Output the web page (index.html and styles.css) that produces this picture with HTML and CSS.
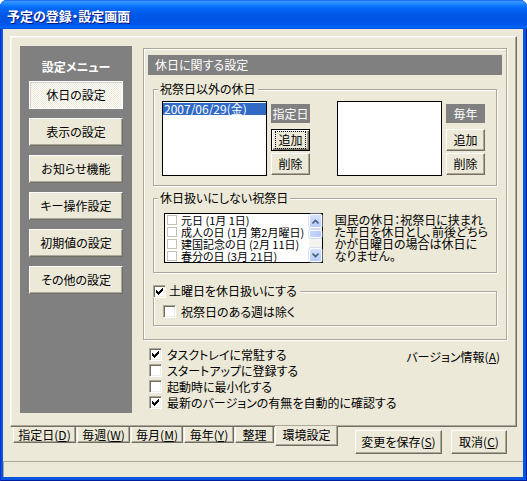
FILE: index.html
```html
<!DOCTYPE html>
<html lang="ja">
<head>
<meta charset="utf-8">
<title>予定の登録・設定画面</title>
<link rel="stylesheet" href="styles.css">
</head>
<body>
<div class="window">
  <div class="titlebar"><span class="title">予定の登録・設定画面</span></div>
  <div class="client">
    <div class="tabpanel">
      <div class="sidebar">
        <div class="menu-title">設定メニュー</div>
        <div class="btn menu-btn active">休日の設定</div>
        <div class="btn menu-btn">表示の設定</div>
        <div class="btn menu-btn">お知らせ機能</div>
        <div class="btn menu-btn">キー操作設定</div>
        <div class="btn menu-btn">初期値の設定</div>
        <div class="btn menu-btn">その他の設定</div>
      </div>
      <div class="main">
        <div class="content">
          <div class="header">休日に関する設定</div>
          <fieldset class="group g1">
            <legend>祝祭日以外の休日</legend>
            <div class="list-row">
              <div class="listbox"><div class="item selected">2007/06/29(金)</div></div>
              <div class="btn-col">
                <div class="tag">指定日</div>
                <div class="btn small default"><span class="focus">追加</span></div>
                <div class="btn small">削除</div>
              </div>
              <div class="listbox second"></div>
              <div class="btn-col">
                <div class="tag">毎年</div>
                <div class="btn small">追加</div>
                <div class="btn small">削除</div>
              </div>
            </div>
          </fieldset>
          <fieldset class="group g2">
            <legend>休日扱いにしない祝祭日</legend>
            <div class="holiday-row">
              <div class="checklist">
                <div class="cl-items">
                  <div class="cl-row"><span class="cb-small"></span>元日 (1月 1日)</div>
                  <div class="cl-row"><span class="cb-small"></span>成人の日 (1月 第2月曜日)</div>
                  <div class="cl-row"><span class="cb-small"></span>建国記念の日 (2月 11日)</div>
                  <div class="cl-row"><span class="cb-small"></span>春分の日 (3月 21日)</div>
                </div>
                <div class="vscroll">
                  <div class="sb-btn"><svg width="7" height="5" viewBox="0 0 7 5"><path d="M0.5 4.5 L3.5 1.5 L6.5 4.5" fill="none" stroke="#4D6185" stroke-width="1.6"/></svg></div>
                  <div class="sb-track"><div class="sb-thumb"></div></div>
                  <div class="sb-btn"><svg width="7" height="5" viewBox="0 0 7 5"><path d="M0.5 0.5 L3.5 3.5 L6.5 0.5" fill="none" stroke="#4D6185" stroke-width="1.6"/></svg></div>
                </div>
              </div>
              <div class="note">国民の休日：祝祭日に挟まれ<br>た平日を休日とし、前後どちら<br>かが日曜日の場合は休日に<br>なりません。</div>
            </div>
          </fieldset>
          <fieldset class="group g3">
            <legend><span class="cb"><svg width="7" height="7" viewBox="0 0 7 7"><path d="M0 2h1v1h1v1h1v-1h1v-1h1v-1h1v-1h1v3h-1v1h-1v1h-1v1h-1v1h-1v-1h-1v-1h-1z"/></svg></span><span class="legend-text">土曜日を休日扱いにする</span></legend>
            <div class="check-row inner"><span class="cb"></span>祝祭日のある週は除く</div>
          </fieldset>
        </div>
        <div class="options">
          <div class="checks">
            <div class="check-row"><span class="cb"><svg width="7" height="7" viewBox="0 0 7 7"><path d="M0 2h1v1h1v1h1v-1h1v-1h1v-1h1v-1h1v3h-1v1h-1v1h-1v1h-1v1h-1v-1h-1v-1h-1z"/></svg></span>タスクトレイに常駐する</div>
            <div class="check-row"><span class="cb"></span>スタートアップに登録する</div>
            <div class="check-row"><span class="cb"></span>起動時に最小化する</div>
            <div class="check-row"><span class="cb"><svg width="7" height="7" viewBox="0 0 7 7"><path d="M0 2h1v1h1v1h1v-1h1v-1h1v-1h1v-1h1v3h-1v1h-1v1h-1v1h-1v1h-1v-1h-1v-1h-1z"/></svg></span>最新のバージョンの有無を自動的に確認する</div>
          </div>
          <div class="version">バージョン情報(<u>A</u>)</div>
        </div>
      </div>
    </div>
    <div class="bottom">
      <div class="tabs">
        <div class="tab t1">指定日(<u>D</u>)</div>
        <div class="tab t2">毎週(<u>W</u>)</div>
        <div class="tab t3">毎月(<u>M</u>)</div>
        <div class="tab t4">毎年(<u>Y</u>)</div>
        <div class="tab t5">整理</div>
        <div class="tab t6 selected">環境設定</div>
      </div>
      <div class="buttons">
        <div class="btn wide">変更を保存(<u>S</u>)</div>
        <div class="btn cancel">取消(<u>C</u>)</div>
      </div>
    </div>
    <div class="statusbar"></div>
  </div>
</div>
</body>
</html>
```
FILE: styles.css
```css
html, body {
  margin: 0;
  padding: 0;
}
body {
  background: #ffffff;
  font-family: "Noto Sans CJK JP", "Noto Sans", sans-serif;
  font-size: 12px;
  font-feature-settings: "palt";
  color: #000;
}
u { text-decoration: underline; text-underline-offset: 1px; }

.window {
  width: 527px;
  height: 481px;
  box-sizing: border-box;
  display: flex;
  flex-direction: column;
  background: #0A55E0;
  border-radius: 7px 7px 0 0;
  overflow: hidden;
  box-shadow: inset 1px 0 0 #0831D9, inset -1px 0 0 #001EA0, inset 0 -1px 0 #001EA0;
}
.titlebar {
  height: 29px;
  flex: none;
  display: flex;
  align-items: center;
  padding-left: 7px;
  background: linear-gradient(180deg, #0058EE 0px, #3A93FF 1px, #288EFF 3px, #127DFF 5px, #0369FC 8px, #0262EE 11px, #0057E5 15px, #0054E3 20px, #0055EB 24px, #005BF5 26px, #026AFE 27px, #0062EF 28px, #0043CF 29px);
}
.title {
  color: #fff;
  font-weight: bold;
  font-size: 13px;
  line-height: 16px;
  text-shadow: 1px 1px 0 #0A1883;
  margin-top: 2px;
}
.client {
  flex: 1;
  margin: 0 4px 4px 3px;
  background: #ECE9D8;
  display: flex;
  flex-direction: column;
  padding: 7px 6px 0 7px;
  min-height: 0;
}

/* tab panel */
.tabpanel {
  height: 391px;
  flex: none;
  box-sizing: border-box;
  border: 1px solid;
  border-color: #fff #716F64 #716F64 #fff;
  box-shadow: inset -1px -1px 0 #ACA899, inset 1px 1px 0 #F5F4EA;
  display: grid;
  grid-template-columns: 112px 364px;
  column-gap: 11px;
  padding: 9px 9px 13px 9px;
}

/* generic button */
.btn {
  box-sizing: border-box;
  background: #ECE9D8;
  border: 1px solid;
  border-color: #fff #716F64 #716F64 #fff;
  box-shadow: inset -1px -1px 0 #ACA899;
  display: flex;
  align-items: center;
  justify-content: center;
  white-space: nowrap;
  line-height: 14px;
}

/* sidebar */
.sidebar {
  background: #808080;
  display: flex;
  flex-direction: column;
  align-items: center;
  padding-top: 14px;
  gap: 9px;
}
.menu-title {
  color: #fff;
  font-weight: bold;
  line-height: 14px;
  margin-bottom: -2px;
}
.menu-btn {
  width: 94px;
  height: 28px;
  font-size: 12px;
}
.menu-btn.active {
  background: repeating-conic-gradient(#ffffff 0 25%, #ECE9D8 0 50%) 0 0 / 2px 2px;
  border-color: #fff;
  box-shadow: inset 1px 1px 0 #D4D0C8;
}

/* main column */
.main {
  display: flex;
  flex-direction: column;
  padding-top: 2px;
  min-width: 0;
}
.content {
  height: 292px;
  box-sizing: border-box;
  border: 1px solid #ACA899;
  box-shadow: inset 1px 1px 0 #fff, 1px 1px 0 #fff;
  padding: 6px 4px 0 4px;
  display: flex;
  flex-direction: column;
  flex: none;
}
.header {
  height: 20px;
  background: #808080;
  color: #fff;
  line-height: 20px;
  padding-left: 7px;
}

/* group boxes */
.group {
  border: 1px solid #ACA899;
  box-shadow: inset 1px 1px 0 #fff, 1px 1px 0 #fff;
  margin: 0 5px;
  padding: 0 8px 8px 8px;
  min-inline-size: 0;
}
.group legend {
  padding: 0 2px;
  margin-left: -4px;
  line-height: 14px;
  background: #ECE9D8;
}
.g1 { margin-top: 7px; }
.g2 { margin-top: 5px; padding-bottom: 9px; }
.g3 { margin-top: 11px; padding-bottom: 7px; }
.g3 legend {
  margin-left: -9px;
  padding: 0 3px 0 0;
  display: flex;
  align-items: center;
}
.legend-text { margin-left: 3px; }

.list-row {
  display: flex;
  margin-top: 5px;
}
.listbox {
  width: 105px;
  height: 75px;
  box-sizing: border-box;
  border: 1px solid #000;
  background: #fff;
  padding-top: 1px;
}
.listbox.second { margin-left: 27px; }
.item {
  height: 12px;
  line-height: 12px;
  padding-left: 1px;
  white-space: nowrap;
}
.item.selected {
  background: #316AC5;
  color: #fff;
}
.btn-col {
  width: 39px;
  margin-left: 4px;
  padding-top: 3px;
  display: flex;
  flex-direction: column;
}
.tag {
  height: 19px;
  background: #808080;
  color: #fff;
  line-height: 19px;
  text-align: center;
  margin-bottom: 6px;
}
.btn.small {
  height: 22px;
  margin-bottom: 2px;
}
.btn.default {
  border: 1px solid #000;
  box-shadow: inset 1px 1px 0 #fff, inset -1px -1px 0 #716F64, inset -2px -2px 0 #ACA899;
}
.focus {
  outline: 1px dotted #000;
  outline-offset: 1px;
  padding: 0 1px;
}

/* holidays checklist */
.holiday-row {
  display: flex;
  margin-top: 8px;
  margin-left: 2px;
}
.checklist {
  width: 173px;
  height: 50px;
  box-sizing: border-box;
  border: 1px solid #000;
  background: #fff;
  display: flex;
}
.cl-items {
  flex: 1;
  overflow-x: clip;
  min-width: 0;
}
.cl-row {
  height: 12px;
  line-height: 12px;
  font-size: 11px;
  display: flex;
  align-items: center;
  white-space: nowrap;
}
.cb-small {
  width: 10px;
  height: 10px;
  box-sizing: border-box;
  border: 1px solid #C5C2B2;
  background: #fff;
  margin: 0 4px 0 2px;
  flex: none;
}
.vscroll {
  width: 13px;
  flex: none;
  display: flex;
  flex-direction: column;
  background: #F4F3EE;
}
.sb-btn {
  height: 14px;
  box-sizing: border-box;
  border: 1px solid #fff;
  border-radius: 2px;
  background: linear-gradient(#D6E2FE, #B9CCF8);
  box-shadow: 0 0 0 0.5px #B4C8F6;
  display: flex;
  align-items: center;
  justify-content: center;
}
.sb-track {
  flex: 1;
  padding-top: 2px;
}
.sb-thumb {
  height: 8px;
  box-sizing: border-box;
  border: 1px solid #fff;
  border-radius: 2px;
  background: linear-gradient(90deg, #C6D6FC, #B3C8F7);
  box-shadow: 0 0 0 0.5px #A4BCF4;
}
.note {
  margin-left: 12px;
  margin-top: 1px;
  line-height: 12px;
  white-space: nowrap;
}

/* checkboxes */
.cb {
  width: 13px;
  height: 13px;
  box-sizing: border-box;
  background: #fff;
  border: 1px solid;
  border-color: #ACA899 #fff #fff #ACA899;
  box-shadow: inset 1px 1px 0 #716F64, inset -1px -1px 0 #F1EFE2;
  display: flex;
  align-items: center;
  justify-content: center;
  flex: none;
}
.cb svg { display: block; fill: #000; }
.check-row {
  height: 16px;
  display: flex;
  align-items: center;
  gap: 5px;
  white-space: nowrap;
}
.check-row.inner {
  margin-top: 6px;
  margin-left: 1px;
  height: 14px;
}

/* options below content */
.options {
  display: flex;
  justify-content: space-between;
  padding: 6px 7px 0 6px;
}
.checks {
  display: flex;
  flex-direction: column;
}
.version {
  margin-top: 4px;
  line-height: 14px;
  height: 14px;
}

/* bottom row */
.bottom {
  height: 34px;
  flex: none;
  display: flex;
  justify-content: space-between;
  align-items: flex-start;
}
.tabs {
  display: flex;
  gap: 1px;
  margin-left: 3px;
}
.tab {
  height: 16px;
  box-sizing: border-box;
  border-left: 1px solid #fff;
  border-right: 1px solid #716F64;
  border-bottom: 1px solid #716F64;
  box-shadow: inset -1px -1px 0 #ACA899;
  background: #ECE9D8;
  line-height: 15px;
  text-align: center;
  white-space: nowrap;
}
.t1 { width: 63px; }
.t2 { width: 53px; }
.t3 { width: 52px; }
.t4 { width: 50px; }
.t5 { width: 39px; }
.t6 { width: 63px; }
.tab.selected {
  margin-top: -1px;
  height: 20px;
  line-height: 18px;
}
.buttons {
  display: flex;
  gap: 9px;
  margin-top: 3px;
  margin-right: 10px;
}
.btn.wide { width: 87px; height: 24px; }
.btn.cancel { width: 56px; height: 24px; }

.statusbar {
  flex: 1;
  margin: 0 -6px 0 -7px;
  box-sizing: border-box;
  border-top: 1px solid #ACA899;
  border-left: 1px solid #ACA899;
  background: #ECE9D8;
}
```
